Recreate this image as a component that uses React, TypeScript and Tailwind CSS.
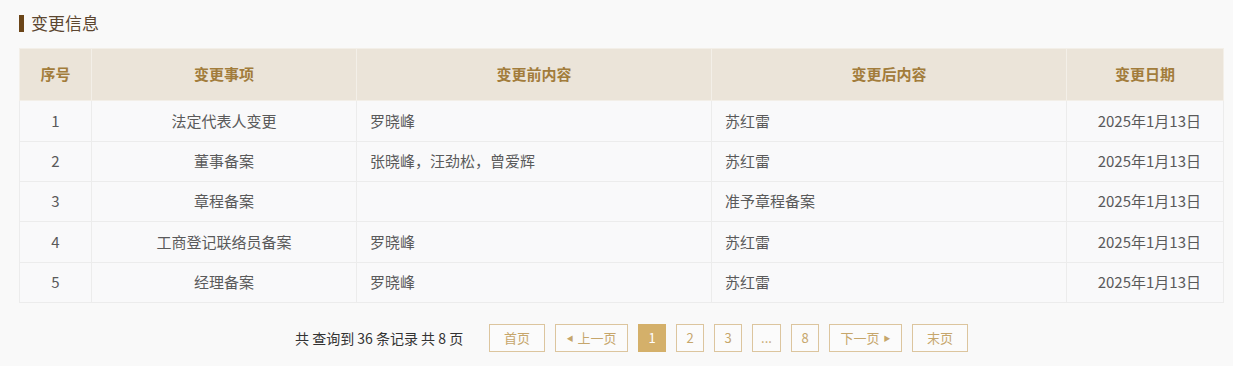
import React from "react";

const rows = [
  ["1", "法定代表人变更", "罗晓峰", "苏红雷", "2025年1月13日", "h-[41px]"],
  ["2", "董事备案", "张晓峰，汪劲松，曾爱辉", "苏红雷", "2025年1月13日", "h-[40px]"],
  ["3", "章程备案", "", "准予章程备案", "2025年1月13日", "h-[40px]"],
  ["4", "工商登记联络员备案", "罗晓峰", "苏红雷", "2025年1月13日", "h-[41px]"],
  ["5", "经理备案", "罗晓峰", "苏红雷", "2025年1月13日", "h-[40px]"],
];

const font = { fontFamily: '"Noto Sans CJK SC", "Noto Sans", sans-serif' };

function PageBtn({ children, w, active }: { children: React.ReactNode; w: string; active?: boolean }) {
  return (
    <div
      className={`${w} h-[28px] flex items-center justify-center text-[13px] border ${
        active ? "bg-[#d4b06a] border-[#d4b06a] text-white" : "border-[#dcc59e] text-[#c6a66b] bg-[#fbfbfb]"
      }`}
    >
      {children}
    </div>
  );
}

export default function App() {
  return (
    <div className="w-[1233px] h-[366px] bg-[#f9f9f9] overflow-hidden" style={font}>
      <div className="pl-[19px] pt-[11px] flex items-center h-[35px]">
        <div className="w-[5px] h-[17px] bg-[#6b4518] mr-[7px]" />
        <div className="text-[17px] text-[#5c4630] leading-[24px]">变更信息</div>
      </div>
      <div className="pl-[19px] pt-[13px]">
        <table className="w-[1204px] border-collapse table-fixed">
          <colgroup>
            <col className="w-[72px]" />
            <col className="w-[265px]" />
            <col className="w-[355px]" />
            <col className="w-[355px]" />
            <col className="w-[157px]" />
          </colgroup>
          <thead>
            <tr className="h-[52px] bg-[#ebe4d9]">
              {["序号", "变更事项", "变更前内容", "变更后内容", "变更日期"].map((h) => (
                <th key={h} className="border border-[#f3efe8] text-[15px] font-bold text-[#a27c3b] text-center">
                  {h}
                </th>
              ))}
            </tr>
          </thead>
          <tbody>
            {rows.map((r) => (
              <tr key={r[0]} className={`${r[5]} bg-[#f9f9fa] text-[15px] text-[#5a5a5a]`}>
                <td className="border border-[#ececec] text-center">{r[0]}</td>
                <td className="border border-[#ececec] text-center">{r[1]}</td>
                <td className="border border-[#ececec] pl-[13px]">{r[2]}</td>
                <td className="border border-[#ececec] pl-[13px]">{r[3]}</td>
                <td className="border border-[#ececec] text-right pr-[22px]">{r[4]}</td>
              </tr>
            ))}
          </tbody>
        </table>
      </div>
      <div className="flex items-center mt-[21px] pl-[295px]">
        <div className="text-[14px] text-[#333] w-[194px]">共 查询到 36 条记录 共 8 页</div>
        <div className="flex gap-[10px]">
          <PageBtn w="w-[56px]">首页</PageBtn>
          <PageBtn w="w-[73px]">
            <span className="text-[7px] mr-[4px]">◀</span>上一页
          </PageBtn>
          <PageBtn w="w-[28px]" active>1</PageBtn>
          <PageBtn w="w-[28px]">2</PageBtn>
          <PageBtn w="w-[28px]">3</PageBtn>
          <PageBtn w="w-[29px]">...</PageBtn>
          <PageBtn w="w-[28px]">8</PageBtn>
          <PageBtn w="w-[73px]">
            下一页<span className="text-[7px] ml-[4px]">▶</span>
          </PageBtn>
          <PageBtn w="w-[56px]">末页</PageBtn>
        </div>
      </div>
    </div>
  );
}
